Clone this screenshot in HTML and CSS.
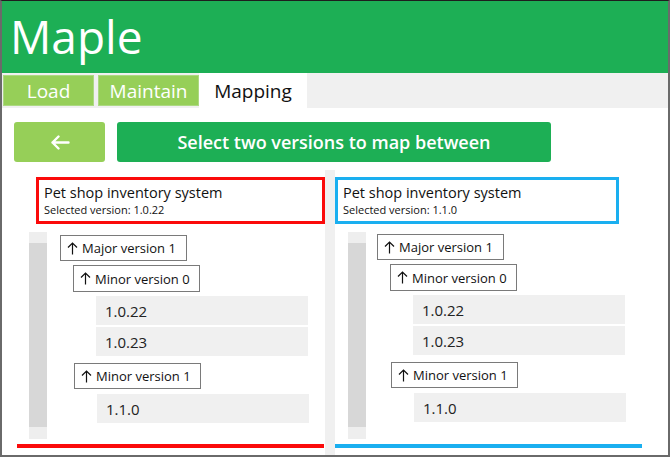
FILE: index.html
```html
<!DOCTYPE html>
<html>
<head>
<meta charset="utf-8">
<title>Maple</title>
<link rel="stylesheet" href="styles.css">
</head>
<body>
<div class="frame">
  <header class="header">Maple</header>
  <nav class="tabs">
    <div class="tab tab-green tab-load">Load</div>
    <div class="tab tab-green tab-maintain">Maintain</div>
    <div class="tab tab-active">Mapping</div>
  </nav>
  <div class="actions">
    <button class="btn btn-back" aria-label="Back">
      <svg width="20" height="15" viewBox="0 0 20 15"><path d="M18.5 7.5H2.5M8.5 1.5L2.5 7.5L8.5 13.5" fill="none" stroke="#fff" stroke-width="2.4" stroke-linecap="round" stroke-linejoin="round"/></svg>
    </button>
    <button class="btn btn-main">Select two versions to map between</button>
  </div>
  <div class="panels">
    <section class="panel panel-left">
      <div class="summary summary-left">
        <div class="summary-title">Pet shop inventory system</div>
        <div class="summary-sub">Selected version: 1.0.22</div>
      </div>
      <div class="tree tree-left">
        <div class="scroll"><div class="scroll-btn"></div><div class="scroll-thumb"></div><div class="scroll-btn scroll-btn-bottom"></div></div>
        <div class="nodes">
          <div class="node node-major"><svg class="up" width="11" height="13" viewBox="0 0 11 13"><path d="M5.5 12.5V1M1 5.5L5.5 1L10 5.5" fill="none" stroke="#111" stroke-width="1.2"/></svg>Major version 1</div>
          <div class="node node-minor"><svg class="up" width="11" height="13" viewBox="0 0 11 13"><path d="M5.5 12.5V1M1 5.5L5.5 1L10 5.5" fill="none" stroke="#111" stroke-width="1.2"/></svg>Minor version 0</div>
          <div class="leaf">1.0.22</div>
          <div class="leaf leaf-next">1.0.23</div>
          <div class="node node-minor node-minor-2"><svg class="up" width="11" height="13" viewBox="0 0 11 13"><path d="M5.5 12.5V1M1 5.5L5.5 1L10 5.5" fill="none" stroke="#111" stroke-width="1.2"/></svg>Minor version 1</div>
          <div class="leaf leaf-last">1.1.0</div>
        </div>
      </div>
      <div class="underline underline-red"></div>
    </section>
    <div class="divider"></div>
    <section class="panel panel-right">
      <div class="summary summary-right">
        <div class="summary-title">Pet shop inventory system</div>
        <div class="summary-sub">Selected version: 1.1.0</div>
      </div>
      <div class="tree tree-right">
        <div class="scroll"><div class="scroll-btn"></div><div class="scroll-thumb"></div><div class="scroll-btn scroll-btn-bottom"></div></div>
        <div class="nodes">
          <div class="node node-major"><svg class="up" width="11" height="13" viewBox="0 0 11 13"><path d="M5.5 12.5V1M1 5.5L5.5 1L10 5.5" fill="none" stroke="#111" stroke-width="1.2"/></svg>Major version 1</div>
          <div class="node node-minor"><svg class="up" width="11" height="13" viewBox="0 0 11 13"><path d="M5.5 12.5V1M1 5.5L5.5 1L10 5.5" fill="none" stroke="#111" stroke-width="1.2"/></svg>Minor version 0</div>
          <div class="leaf">1.0.22</div>
          <div class="leaf leaf-next">1.0.23</div>
          <div class="node node-minor node-minor-2"><svg class="up" width="11" height="13" viewBox="0 0 11 13"><path d="M5.5 12.5V1M1 5.5L5.5 1L10 5.5" fill="none" stroke="#111" stroke-width="1.2"/></svg>Minor version 1</div>
          <div class="leaf leaf-last">1.1.0</div>
        </div>
      </div>
      <div class="underline underline-blue"></div>
    </section>
  </div>
</div>
</body>
</html>
```
FILE: styles.css
```css
* { box-sizing: border-box; }
html, body { margin: 0; padding: 0; background: #fff; }
body {
  font-family: "Open Sans", "DejaVu Sans", sans-serif;
  color: #111;
}
.frame {
  width: 670px;
  height: 457px;
  border-style: solid;
  border-color: #6a6a6a;
  border-top-color: #1e1e1e;
  border-width: 1px 2px 2px 2px;
  overflow: hidden;
  display: flex;
  flex-direction: column;
}
.header {
  height: 72px;
  background: #1daf55;
  color: #fff;
  font-size: 46px;
  line-height: 46px;
  padding: 12px 0 0 8px;
}
.tabs {
  height: 35px;
  background: #f0f0f0;
  display: flex;
}
.tab {
  font-size: 19px;
  display: flex;
  align-items: center;
  justify-content: center;
}
.tab-green {
  background: #96cf58;
  border: 1px solid #acd982;
  color: #fff;
  margin: 2px 0;
}
.tab-load { width: 91px; margin-left: 1px; }
.tab-maintain { width: 101px; margin-left: 4px; }
.tab-active {
  width: 108px;
  background: #fff;
  color: #111;
}
.actions {
  display: flex;
  gap: 12px;
  padding: 14px 0 0 12px;
  height: 54px;
}
.btn {
  border: none;
  border-radius: 3px;
  height: 40px;
  color: #fff;
  font-family: inherit;
  padding: 0;
  display: flex;
  align-items: center;
  justify-content: center;
}
.btn-back { width: 91px; background: #96cf58; }
.btn-main {
  width: 434px;
  background: #1daf55;
  font-size: 18px;
  font-weight: 600;
}
.panels {
  display: flex;
  margin-top: 8px;
  padding-left: 15px;
  flex: 1;
}
.panel {
  width: 308px;
  display: flex;
  flex-direction: column;
}
.divider {
  width: 10px;
  background: #f0f0f0;
}
.summary {
  margin-top: 7px;
  height: 47px;
  border: 3px solid;
  padding: 4px 0 0 5px;
}
.summary-left { border-color: #fb0a0a; width: 289px; margin-left: 19px; }
.summary-right { border-color: #1aaff0; width: 284px; }
.summary-title { font-size: 14.5px; line-height: 18px; }
.summary-sub { font-size: 11px; line-height: 15px; margin-top: 0; }
.tree {
  display: flex;
  margin-top: 8px;
  height: 207px;
}
.tree-left { padding-left: 12px; }
.tree-right { padding-left: 13px; }
.scroll {
  width: 18px;
  display: flex;
  flex-direction: column;
}
.scroll-btn { height: 11px; background: #eeeeee; }
.scroll-btn-bottom { height: 12px; }
.scroll-thumb { flex: 1; background: #d7d7d7; }
.nodes {
  display: flex;
  flex-direction: column;
  align-items: flex-start;
  padding-top: 3px;
}
.tree-left .nodes { margin-left: 13px; }
.tree-right .nodes { margin-left: 11px; padding-top: 2px; }
.node {
  width: 127px;
  height: 27px;
  border: 1px solid #7a7a7a;
  background: #fff;
  font-size: 13px;
  padding-left: 6px;
  display: flex;
  align-items: center;
}
.up {
  margin-right: 4px;
  flex: none;
}
.node-major { height: 26px; }
.node-minor { margin-left: 13px; margin-top: 4px; }
.node-minor-2 { margin-top: 7px; margin-left: 14px; height: 26px; }
.leaf {
  width: 212px;
  height: 29px;
  margin-left: 36px;
  margin-top: 4px;
  background: #f0f0f0;
  font-size: 15px;
  padding-left: 9px;
  display: flex;
  align-items: center;
  color: #222;
}
.leaf-next { margin-top: 2px; }
.leaf-last { margin-top: 5px; margin-left: 37px; }
.underline {
  height: 4px;
  margin-top: 5px;
  width: 307px;
}
.underline-red { background: #fb0a0a; }
.underline-blue { background: #1aaff0; }
```
